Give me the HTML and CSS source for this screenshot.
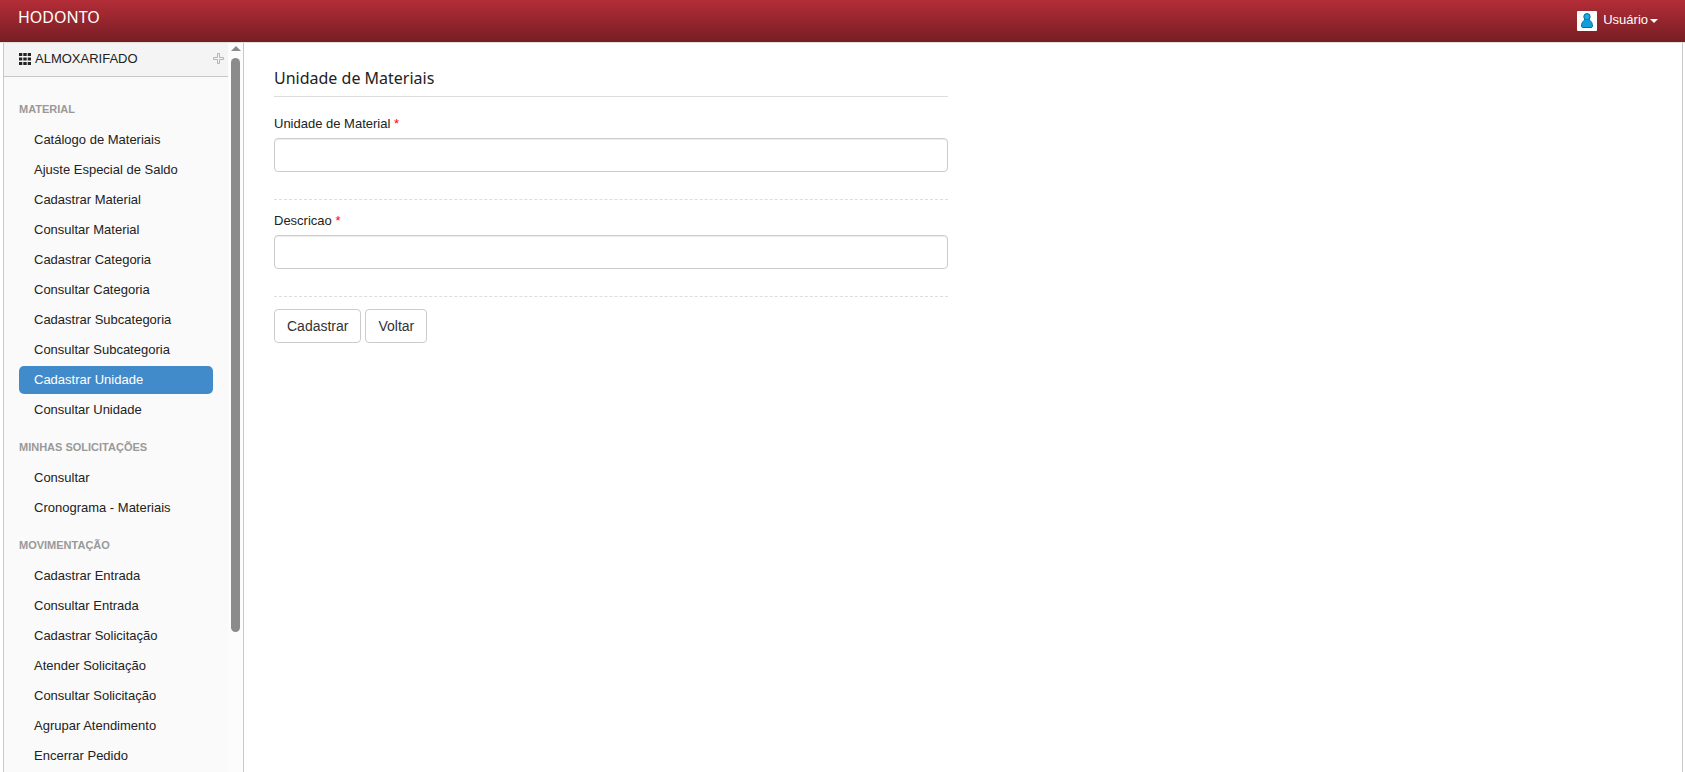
FILE: index.html
```html
<!DOCTYPE html>
<html lang="pt-BR">
<head>
    <meta charset="UTF-8">
    <title>Hodonto</title>
    <link rel="stylesheet" href="styles.css">
</head>
<body>
    <header class="navbar">
        <a class="brand" href="#">HODONTO</a>
        <button class="user-menu" type="button">
            <svg class="avatar" width="20" height="20" viewBox="0 0 20 20" aria-hidden="true">
                <rect width="20" height="20" rx="1" fill="#fff"/>
                <path d="M7.500 8.500C7.500 10 4.500 10.300 4.500 15c0 1 .7 1.500 1.500 1.500h8c.8 0 1.500-.5 1.500-1.500 0-4.700-3-5-3-6.500z" fill="#0f9fdc" stroke="#0b6a9c"/>
                <circle cx="10" cy="5.700" r="3.200" fill="#1fa9e2" stroke="#0b6a9c"/>
                <path d="M8.500 8.800h3v2h-3z" fill="#0f9fdc"/>
            </svg>
            <span class="user-name">Usuário</span>
            <span class="caret"></span>
        </button>
    </header>

    <div class="page">
        <!-- Sidebar -->
        <aside class="sidebar">
            <div class="sidebar-body">
                <div class="module">
                    <svg width="12" height="12" viewBox="0 0 12 12" fill="#222" aria-hidden="true">
                        <path d="M0 0h3.300v3H0zM4.300 0h3.400v3H4.300zM8.700 0H12v3H8.700zM0 4.500h3.300v3H0zM4.300 4.500h3.400v3H4.300zM8.700 4.500H12v3H8.700zM0 9h3.300v3H0zM4.300 9h3.400v3H4.300zM8.700 9H12v3H8.700z"/>
                    </svg>
                    <span class="module-name">ALMOXARIFADO</span>
                    <svg width="11" height="11" viewBox="0 0 11 11" fill="#f4f4f4" stroke="#b5b5b5" aria-hidden="true">
                        <path d="M4.500.5h2v4h4v2h-4v4h-2v-4h-4v-2h4z"/>
                    </svg>
                </div>
                <nav class="menu">
                    <h2>MATERIAL</h2>
                    <ul>
                        <li><a href="#">Catálogo de Materiais</a></li>
                        <li><a href="#">Ajuste Especial de Saldo</a></li>
                        <li><a href="#">Cadastrar Material</a></li>
                        <li><a href="#">Consultar Material</a></li>
                        <li><a href="#">Cadastrar Categoria</a></li>
                        <li><a href="#">Consultar Categoria</a></li>
                        <li><a href="#">Cadastrar Subcategoria</a></li>
                        <li><a href="#">Consultar Subcategoria</a></li>
                        <li><a class="active" href="#">Cadastrar Unidade</a></li>
                        <li><a href="#">Consultar Unidade</a></li>
                    </ul>
                    <h2>MINHAS SOLICITAÇÕES</h2>
                    <ul>
                        <li><a href="#">Consultar</a></li>
                        <li><a href="#">Cronograma - Materiais</a></li>
                    </ul>
                    <h2>MOVIMENTAÇÃO</h2>
                    <ul>
                        <li><a href="#">Cadastrar Entrada</a></li>
                        <li><a href="#">Consultar Entrada</a></li>
                        <li><a href="#">Cadastrar Solicitação</a></li>
                        <li><a href="#">Atender Solicitação</a></li>
                        <li><a href="#">Consultar Solicitação</a></li>
                        <li><a href="#">Agrupar Atendimento</a></li>
                        <li><a href="#">Encerrar Pedido</a></li>
                    </ul>
                </nav>
            </div>
            <div class="scrollbar" aria-hidden="true">
                <span class="scroll-up"></span>
                <span class="scroll-thumb"></span>
            </div>
        </aside>

        <!-- Form -->
        <main class="content">
            <form class="form">
                <h1>Unidade de Materiais</h1>
                <div class="form-group">
                    <label for="unidade">Unidade de Material <span class="required">*</span></label>
                    <input type="text" id="unidade" name="unidade">
                </div>
                <div class="form-group">
                    <label for="descricao">Descricao <span class="required">*</span></label>
                    <input type="text" id="descricao" name="descricao">
                </div>
                <div class="actions">
                    <button class="btn" type="submit">Cadastrar</button>
                    <button class="btn" type="button">Voltar</button>
                </div>
            </form>
        </main>
    </div>
</body>
</html>
```
FILE: styles.css
```css
* {
    box-sizing: border-box;
}
body {
    margin: 0;
    height: 100vh;
    display: flex;
    flex-direction: column;
    overflow: hidden;
    font-family: "Liberation Sans", Arial, sans-serif;
    font-size: 13px;
    line-height: 20px;
    color: #222;
    background: #fff;
}
a {
    color: inherit;
    text-decoration: none;
}

/* Top bar */
.navbar {
    display: flex;
    justify-content: space-between;
    align-items: center;
    height: 43px;
    flex-shrink: 0;
    padding: 0 27px 0 18px;
    background: linear-gradient(#b32d37, #771d24);
    border-bottom: 1px solid #e0e0e0;
    color: #fff;
}
.brand {
    padding-bottom: 8px;
    font-family: "Noto Sans", sans-serif;
    font-size: 16px;
}
.user-menu {
    display: flex;
    align-items: center;
    padding: 0;
    border: 0;
    background: none;
    color: #fff;
    font: inherit;
    cursor: pointer;
}
.avatar {
    margin-right: 6px;
}
.user-name {
    padding-bottom: 2px;
}
.caret {
    margin-left: 2px;
    border-top: 4px solid #fff;
    border-left: 4px solid transparent;
    border-right: 4px solid transparent;
}

.page {
    display: flex;
    flex: 1;
    min-height: 0;
    margin: 0 2px 0 3px;
    border: solid #c8c8c8;
    border-width: 0 1px;
}

/* Sidebar */
.sidebar {
    display: flex;
    width: 240px;
    flex-shrink: 0;
    background: #fafafa;
    border-right: 1px solid #c8c8c8;
}
.sidebar-body {
    flex: 1;
    overflow: hidden;
}
.module {
    display: flex;
    align-items: center;
    height: 34px;
    padding: 0 4px 2px 15px;
    background: #f4f4f4;
    border-bottom: 1px solid #c8c8c8;
}
.module-name {
    flex: 1;
    padding-left: 4px;
}
.menu {
    padding: 9px 15px;
}
.menu h2 {
    margin: 13px 0 5px;
    color: #999;
    font-size: 11px;
    line-height: 20px;
}
.menu ul {
    margin: 0;
    padding: 0;
    list-style: none;
}
.menu li {
    padding-top: 2px;
}
.menu a {
    display: block;
    padding: 4px 15px;
    border-radius: 5px;
}
.menu a.active {
    background: #428bca;
    color: #fff;
}
.scrollbar {
    display: flex;
    flex-direction: column;
    align-items: center;
    width: 15px;
    padding-top: 3px;
    background: #fcfcfc;
}
.scroll-up {
    margin-bottom: 7px;
    border-bottom: 5px solid #8b8b8b;
    border-left: 5px solid transparent;
    border-right: 5px solid transparent;
}
.scroll-thumb {
    width: 9px;
    height: 79%;
    border-radius: 5px;
    background: #8b8b8b;
}

/* Form */
.content {
    flex: 1;
    padding: 20px 30px;
}
.form {
    width: 50%;
    padding-right: 15px;
}
.form h1 {
    margin: 0 0 17px;
    padding: 3px 0 6px;
    border-bottom: 1px solid #ddd;
    font-family: "Noto Sans", sans-serif;
    font-size: 16px;
    font-weight: normal;
    line-height: 24px;
}
.form-group {
    margin-bottom: 11px;
    padding-bottom: 27px;
    border-bottom: 1px dashed #ddd;
}
.form-group label {
    display: block;
    margin-bottom: 4px;
}
.form-group input {
    display: block;
    width: 100%;
    height: 34px;
    padding: 6px 12px;
    border: 1px solid #ccc;
    border-radius: 4px;
    box-shadow: inset 0 1px 1px rgba(0, 0, 0, 0.075);
    font: inherit;
}
.required {
    color: #f00;
}
.actions {
    display: flex;
    gap: 4px;
    padding-top: 1px;
}
.btn {
    padding: 6px 12px;
    border: 1px solid #ccc;
    border-radius: 4px;
    background: #fff;
    color: #333;
    font-family: inherit;
    font-size: 14px;
    line-height: 20px;
    cursor: pointer;
}
```
